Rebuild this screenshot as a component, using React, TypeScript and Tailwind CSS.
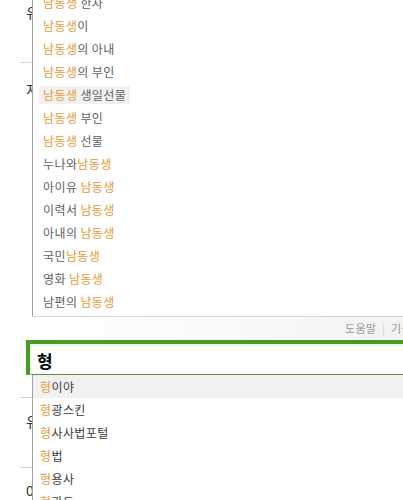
const font = { fontFamily: "'Noto Sans CJK KR', 'Noto Sans', sans-serif" };

const topRows: [string, string, boolean][] = [
  ["남동생", " 한자", true],
  ["남동생", "이", true],
  ["남동생", "의 아내", true],
  ["남동생", "의 부인", true],
  ["남동생", " 생일선물", true],
  ["남동생", " 부인", true],
  ["남동생", " 선물", true],
  ["누나와", "남동생", false],
  ["아이유 ", "남동생", false],
  ["이력서 ", "남동생", false],
  ["아내의 ", "남동생", false],
  ["국민", "남동생", false],
  ["영화 ", "남동생", false],
  ["남편의 ", "남동생", false],
];

const bottomRows = ["이야", "광스킨", "사사법포털", "법", "용사", "카드"];

function Row({ a, b, lead, selected }: { a: string; b: string; lead: boolean; selected?: boolean }) {
  const hl = <span className="text-[#e69a35]">{lead ? a : b}</span>;
  const rest = <span className="text-[#606060]">{lead ? b : a}</span>;
  return (
    <div className="h-[23px] flex items-center pl-[6px]">
      <span
        className={`px-[4px] leading-[18px] whitespace-pre tracking-[0.4px] ${selected ? "bg-[#f1f1f1]" : ""}`}
      >
        {lead ? (
          <>
            {hl}
            {rest}
          </>
        ) : (
          <>
            {rest}
            {hl}
          </>
        )}
      </span>
    </div>
  );
}

function Frag({ ch }: { ch: string }) {
  return (
    <div className="h-[16px] w-[32px] overflow-hidden">
      <span className="block ml-[26px] text-[14px] leading-[16px] text-[#333]">{ch}</span>
    </div>
  );
}

export default function App() {
  return (
    <div className="w-[403px] h-[500px] overflow-hidden bg-white text-[12px]" style={font}>
      {/* top dropdown */}
      <div className="flex h-[340px]">
        <div className="w-[32px] shrink-0 flex flex-col">
          <div className="h-[4px]" />
          <Frag ch="유" />
          <div className="h-[42px]" />
          <div className="h-px w-[12px] ml-[20px] bg-[#d5d5d5]" />
          <div className="h-[18px]" />
          <Frag ch="자" />
        </div>
        <div className="flex-1 min-w-0 flex flex-col">
          <div className="h-[316px] border-l border-[#a3a3a3] overflow-hidden">
            <div className="-mt-[9px]">
              {topRows.map(([a, b, lead], i) => (
                <Row key={i} a={a} b={b} lead={lead} selected={i === 4} />
              ))}
            </div>
          </div>
          <div className="h-px bg-[#d8d8d8]" />
          <div className="flex-1 flex items-center overflow-hidden bg-gradient-to-r from-white via-[#fafafa] to-[#f3f3f3] pl-[313px]">
            <span className="text-[11px] text-[#9a9a9a] whitespace-nowrap tracking-[0.3px]">
              도움말 <span className="text-[#cfcfcf] mx-[3px]">|</span> 기능
            </span>
          </div>
        </div>
      </div>

      {/* search box + bottom dropdown */}
      <div className="flex">
        <div className="w-[32px] shrink-0 flex flex-col">
          <div className="h-[57px]" />
          <div className="h-px w-[12px] ml-[20px] bg-[#d0d0d0]" />
          <div className="h-[15px]" />
          <Frag ch="유" />
          <div className="h-[38px]" />
          <div className="h-px w-[12px] ml-[20px] bg-[#d0d0d0]" />
          <div className="h-[14px]" />
          <Frag ch="0" />
        </div>
        <div className="flex-1 -ml-[6px] flex flex-col">
          <div className="h-[35px] border-t-4 border-l-4 border-[#469c27] bg-white flex flex-col">
            <div className="flex-1 flex items-center border-t-[3px] border-l-[2px] border-[#eef8e3] border-b border-b-[#5f8a3a] pl-[5px]">
              <span className="text-[17px] font-bold text-black leading-none">형</span>
            </div>
          </div>
          <div className="ml-[6px] border-l border-[#a3a3a3]">
            {bottomRows.map((r, i) => (
              <div
                key={i}
                className={`h-[23px] flex items-center pl-[7px] tracking-[0.4px] ${i === 0 ? "bg-[#f1f1f1]" : ""}`}
              >
                <span className="text-[#e69a35]">형</span>
                <span className="text-[#3a3a3a]">{r}</span>
              </div>
            ))}
          </div>
        </div>
      </div>
    </div>
  );
}
